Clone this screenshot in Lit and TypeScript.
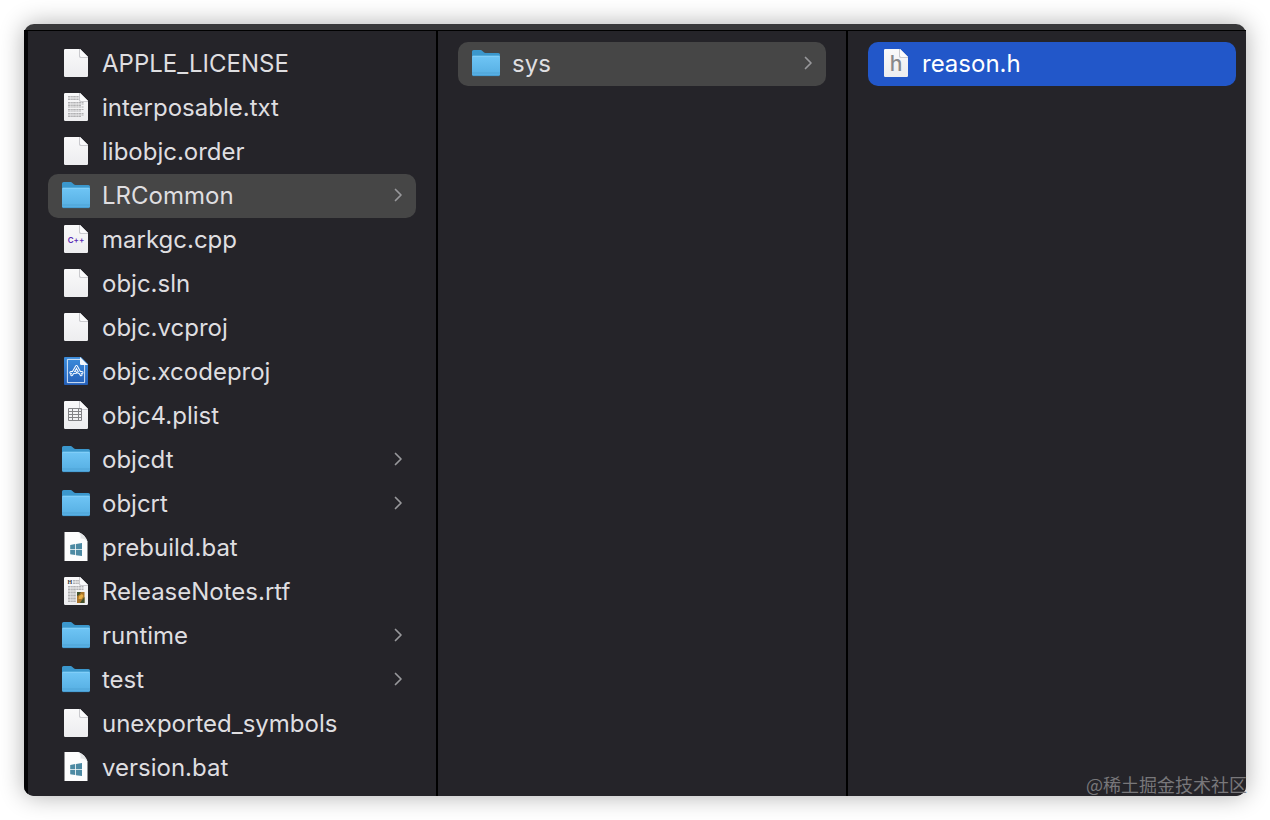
import { LitElement, html, svg, css, nothing } from "lit";
import { customElement, property } from "lit/decorators.js";
import { classMap } from "lit/directives/class-map.js";

type Kind = "blank" | "text" | "folder" | "cpp" | "xcode" | "plist" | "bat" | "rtf" | "header";

interface Entry {
  name: string;
  kind: Kind;
  state?: "path" | "active";
}

const COLUMNS: { label: string; entries: Entry[] }[] = [
  {
    label: "Project files",
    entries: [
      { name: "APPLE_LICENSE", kind: "blank" },
      { name: "interposable.txt", kind: "text" },
      { name: "libobjc.order", kind: "blank" },
      { name: "LRCommon", kind: "folder", state: "path" },
      { name: "markgc.cpp", kind: "cpp" },
      { name: "objc.sln", kind: "blank" },
      { name: "objc.vcproj", kind: "blank" },
      { name: "objc.xcodeproj", kind: "xcode" },
      { name: "objc4.plist", kind: "plist" },
      { name: "objcdt", kind: "folder" },
      { name: "objcrt", kind: "folder" },
      { name: "prebuild.bat", kind: "bat" },
      { name: "ReleaseNotes.rtf", kind: "rtf" },
      { name: "runtime", kind: "folder" },
      { name: "test", kind: "folder" },
      { name: "unexported_symbols", kind: "blank" },
      { name: "version.bat", kind: "bat" },
    ],
  },
  { label: "LRCommon", entries: [{ name: "sys", kind: "folder", state: "path" }] },
  { label: "sys", entries: [{ name: "reason.h", kind: "header", state: "active" }] },
];

const sheet = svg`
  <path d="M5.2 1H20l8 8v18.8a1.2 1.2 0 0 1-1.2 1.2H5.2A1.2 1.2 0 0 1 4 27.8V2.2A1.2 1.2 0 0 1 5.2 1z" fill="url(#paper)"/>
  <path d="M19.200 1v7.600a1.200 1.200 0 0 0 1.200 1.200H28V9l-8-8z" fill="#bdbdc2"/>
  <path d="M20 1v6.800a1.200 1.200 0 0 0 1.200 1.200H28z" fill="#fbfbfc"/>`;

const line = (x: number, y: number, w: number) =>
  svg`<path d=${`M${x} ${y}h${w}`} stroke="#a9a9ab" stroke-width="0.9" stroke-dasharray="2.6 .5 1.7 .4"/>`;

const appGlyph = "M16.5 10.500l4.600 8.300M16.5 10.500l-4.800 8.300M10.800 16.600h4.800M18.600 16.600h3.400";

const glyphs: Record<Kind, unknown> = {
  blank: sheet,
  text: svg`${sheet}
    ${[4.5, 6, 7.5].map((y) => line(8, y, 11))}
    ${[10.5, 12, 13.5, 15, 17.5, 19, 21.5, 23, 24.5].map((y, i) => line(8, y, i % 3 === 2 ? 13 : 16))}`,
  folder: svg`
    <path d="M2 3.600a1.600 1.600 0 0 1 1.600-1.600h6.600c1 0 1.500.3 2.200 1l1.400 1.200c.5.5 1 .7 1.800.7h12.800A1.600 1.600 0 0 1 30 6.500V24H2z" fill="#3b97cc"/>
    <path d="M2 9.200A1.400 1.400 0 0 1 3.400 7.800h25.200A1.400 1.400 0 0 1 30 9.200v17.400a1.400 1.400 0 0 1-1.400 1.400H3.400A1.400 1.400 0 0 1 2 26.600z" fill="url(#folder)"/>
    <path d="M2.600 8.300h26.800" stroke="#8fd6fb" stroke-width=".7"/>
    <path d="M2 25h28" stroke="#4a9dd0" stroke-width=".7"/>
    <path d="M2.600 27.700h26.800" stroke="#3a8dc2" stroke-width=".6"/>`,
  cpp: svg`${sheet}<text class="code" x="16" y="18.800" text-anchor="middle">C++</text>`,
  xcode: svg`
    <path d="M5 1h16l7 7v20a1 1 0 0 1-1 1H5a1 1 0 0 1-1-1V2a1 1 0 0 1 1-1z" fill="url(#blue)"/>
    <path d="M20 3.400H7.400v23.200h17.200V8.500" fill="none" stroke="#e6f1fc" stroke-width=".9"/>
    <path d="M20 1v6.800a1.200 1.200 0 0 0 1.200 1.200H28z" fill="#f4f8fc"/>
    <path d=${appGlyph} fill="none" stroke="#f3f8fe" stroke-width="3" stroke-linecap="round"/>
    <path d=${appGlyph} fill="none" stroke="#2f79cf" stroke-width="1" stroke-linecap="round"/>`,
  plist: svg`${sheet}
    <path d="M8.500 8.500h13v12h-13zM8.500 11.500h13M8.500 14.500h13M8.500 17.500h13M12.500 8.500v12M18.500 8.500v12" fill="none" stroke="#838386" stroke-width="1"/>`,
  bat: svg`
    <path d="M4.500 0H18.500c4.500 2 7.500 5 9 9.500V29h-23z" fill="#fdfdfd"/>
    <path d="M18.500 0c2 1.700 2.500 4 2 6.500 2.500-.3 5 .6 7 3C26 5 23 2 18.500 0z" fill="#e3e5e7"/>
    <path d="M10.200 12.900l5-.8v5.100h-5zM16 12l6-.9v6.100h-6zM10.200 18h5v5l-5-.8zM16 18h6v6.100l-6-.9z" fill="#4d8aa3"/>`,
  rtf: svg`${sheet}
    <text class="initial" x="7.500" y="8">H</text>
    ${[4.5, 6, 7.5].map((y) => line(13, y, 6))}
    ${[10.5, 12, 13.5].map((y) => line(8, y, 16))}
    ${[15, 16.5, 18, 19.5, 21, 22.5, 24, 25.5].map((y) => line(8, y, 8))}
    <path d="M17 16h7.500v11H17z" fill="#a8742b"/>
    <path d="M17 16h4l-2 3-2 1zM22 24l2.500-3v6H20z" fill="#41512c"/>
    <path d="M19 20l3-2 1.500 2-2 3h-3z" fill="#e5ad43"/>`,
  header: svg`${sheet}<text class="letter" x="16" y="23" text-anchor="middle">h</text>`,
};

@customElement("file-icon")
class FileIcon extends LitElement {
  @property() kind: Kind = "blank";

  static styles = css`
    :host { display: block; flex: none; width: 32px; height: 32px; }
    .glyph { display: block; width: 100%; height: 100%; }
    .code { font: 600 8px Inter, sans-serif; fill: #5b2bb5; }
    .initial { font: 700 6px "Liberation Serif", serif; fill: #333; }
    .letter { font: 500 21px Inter, sans-serif; fill: #88888a; }
  `;

  render() {
    return html`<svg class="glyph" viewBox="0 0 32 32" aria-hidden="true">
      <defs>
        <linearGradient id="paper" x1="0" y1="0" x2="0" y2="1">
          <stop offset="0" stop-color="#f9f9fa"/><stop offset="1" stop-color="#ededef"/>
        </linearGradient>
        <linearGradient id="folder" x1="0" y1="0" x2="0" y2="1">
          <stop offset="0" stop-color="#6fc5f5"/><stop offset="1" stop-color="#55aee2"/>
        </linearGradient>
        <linearGradient id="blue" x1="0" y1="0" x2="0" y2="1">
          <stop offset="0" stop-color="#3c8ddc"/><stop offset="1" stop-color="#245fb8"/>
        </linearGradient>
      </defs>
      ${glyphs[this.kind]}
    </svg>`;
  }
}

@customElement("app-root")
class AppRoot extends LitElement {
  static styles = css`
    :host {
      display: flex;
      box-sizing: border-box;
      min-height: 100vh;
      padding: 24px;
      background: #fff;
      font-family: Inter, "Noto Sans CJK SC", sans-serif;
    }
    .window {
      position: relative;
      flex: 1;
      display: flex;
      flex-direction: column;
      padding-top: 6px;
      border-radius: 10px;
      background: #38383a;
      box-shadow: 0 0 24px rgba(0, 0, 0, 0.32);
    }
    .browser {
      flex: 1;
      display: grid;
      grid-template-columns: 414fr 410fr 398fr;
      border-top: 1px solid #000;
      border-radius: 0 0 10px 10px;
      background: #252429;
      overflow: hidden;
    }
    .column {
      margin: 0;
      padding: 11px 20px 6px;
      list-style: none;
      border-right: 2px solid #000;
    }
    .column:first-child { border-left: 4px solid #050507; }
    .column:last-child { border-right: 0; padding-right: 10px; }
    .row {
      display: flex;
      align-items: center;
      gap: 10px;
      width: 100%;
      height: 44px;
      padding: 0 12px;
      border: 0;
      border-radius: 10px;
      background: none;
      color: #dfdee0;
      font: inherit;
      font-size: 24px;
      line-height: 28px;
      text-align: left;
    }
    .path { background: #464646; }
    .active { background: #2257c9; color: #fff; }
    .name { flex: 1; }
    .chevron {
      width: 12px;
      height: 16px;
      fill: none;
      stroke: #98989b;
      stroke-width: 1.7;
      stroke-linecap: round;
      stroke-linejoin: round;
    }
    .watermark {
      position: absolute;
      right: -1px;
      bottom: 0;
      color: #78777a;
      font-family: "Noto Sans CJK SC", sans-serif;
      font-size: 18px;
      line-height: 24px;
    }
  `;

  render() {
    return html`<main class="window">
      <div class="browser">
        ${COLUMNS.map(
          (column) => html`<ul class="column" aria-label=${column.label}>
            ${column.entries.map(
              (entry) => html`<li>
                <button class=${classMap({ row: true, path: entry.state === "path", active: entry.state === "active" })}>
                  <file-icon .kind=${entry.kind}></file-icon>
                  <span class="name">${entry.name}</span>
                  ${entry.kind === "folder"
                    ? html`<svg class="chevron" viewBox="0 0 12 16" aria-hidden="true"><path d="M3.500 1.500L9 7l-5.500 5.500"/></svg>`
                    : nothing}
                </button>
              </li>`
            )}
          </ul>`
        )}
      </div>
      <span class="watermark">@稀土掘金技术社区</span>
    </main>`;
  }
}
